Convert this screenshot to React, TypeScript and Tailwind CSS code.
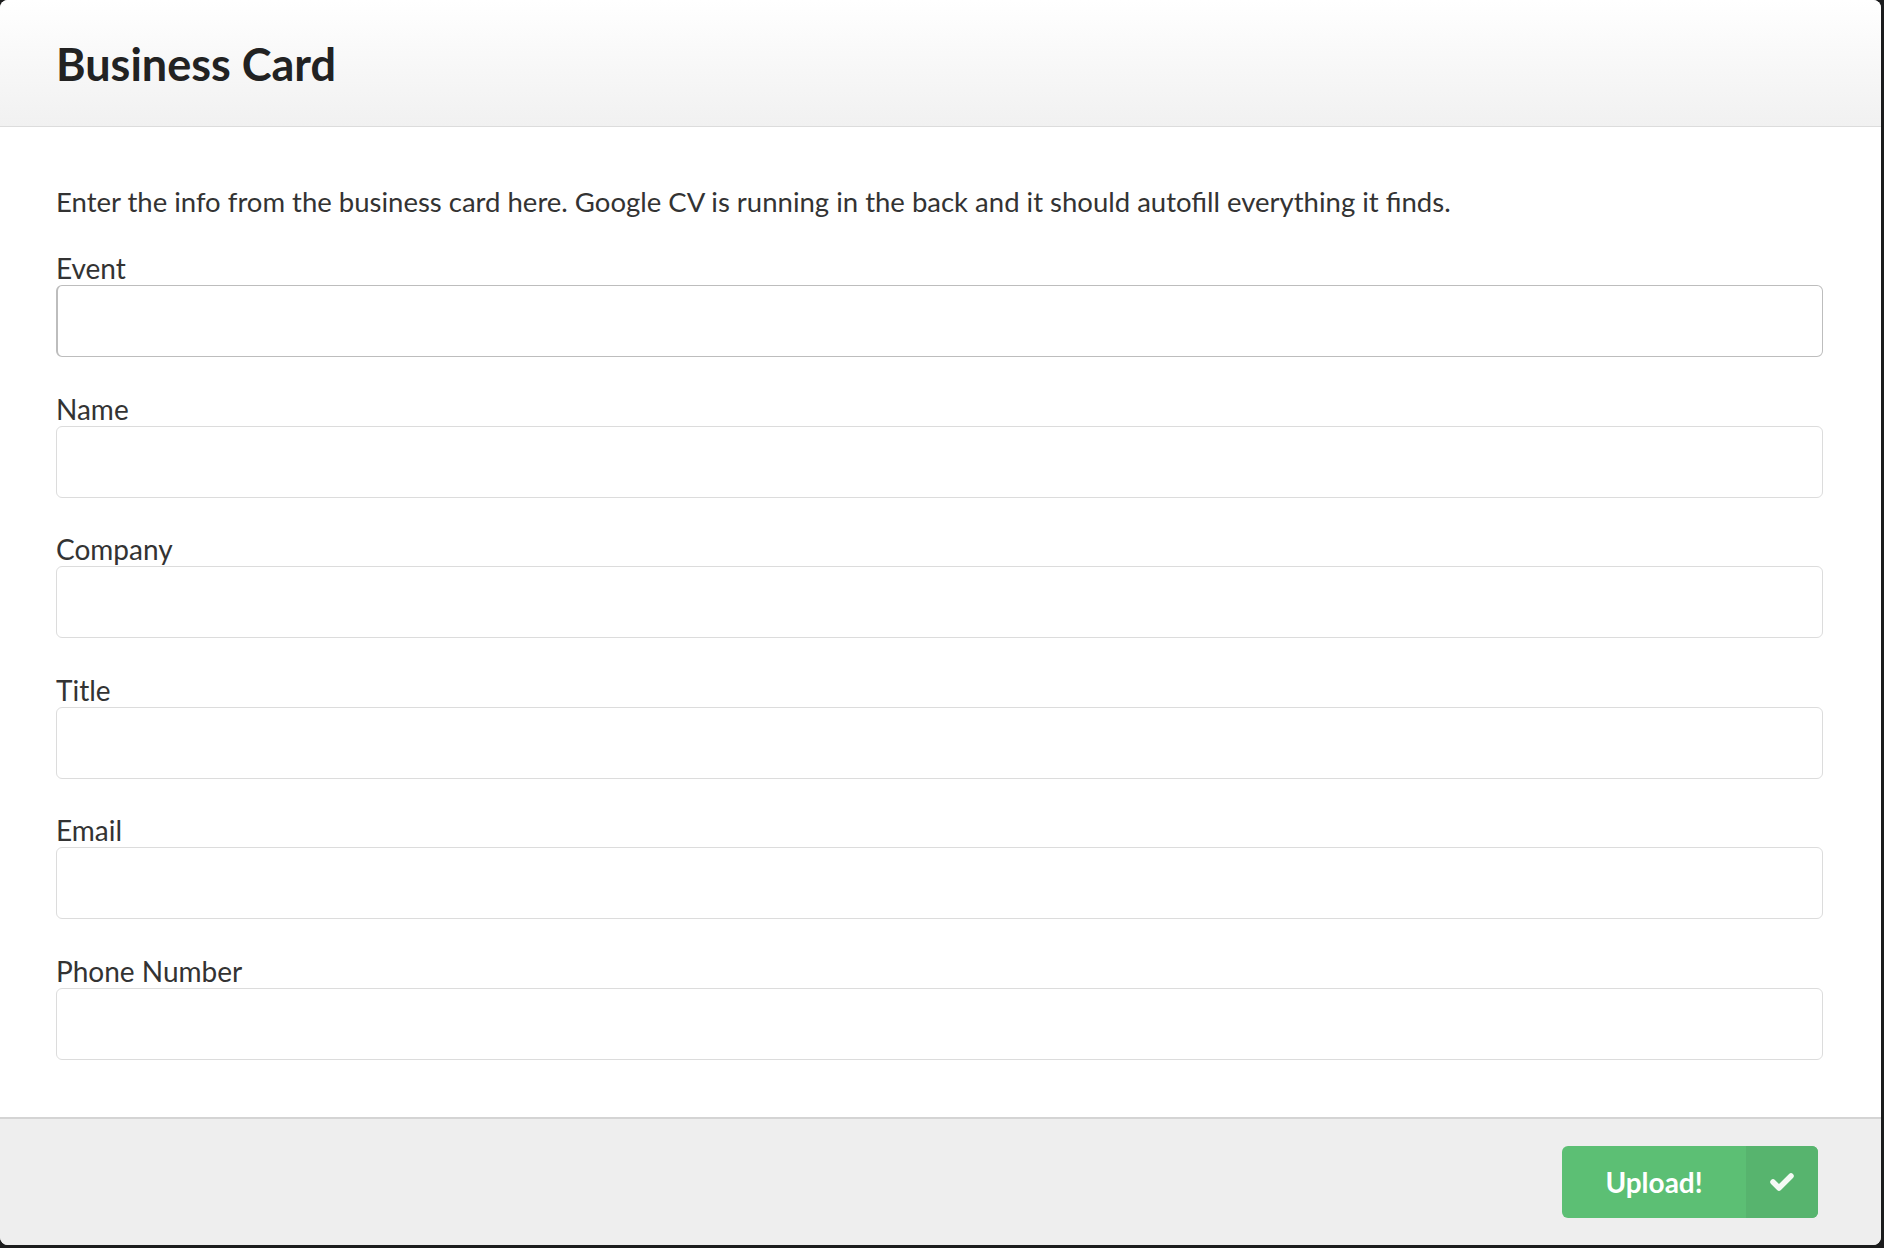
const fields = ['Event', 'Name', 'Company', 'Title', 'Email', 'Phone Number'];

function CheckIcon() {
  return (
    <svg width="26" height="20" viewBox="0 0 26 20" fill="none">
      <polyline
        points="4,10 10,16 22,4"
        stroke="#f4faf5"
        strokeWidth="5.5"
        strokeLinecap="round"
        strokeLinejoin="round"
      />
    </svg>
  );
}

export default function App() {
  return (
    <div className="w-[1884px] h-[1248px] bg-[#1b1c1d] font-['Lato','Liberation_Sans',sans-serif]">
      <div className="w-[1881px] h-[1245px] bg-white rounded-lg overflow-hidden flex flex-col">
        {/* Header */}
        <div className="h-[127px] shrink-0 flex items-center px-[56px] border-b border-[#dcdcdc] bg-gradient-to-b from-white to-[#f1f1f1]">
          <h1 className="text-[45px] leading-[56px] font-bold text-[#222] mt-[2px]">Business Card</h1>
        </div>

        {/* Body */}
        <div className="flex-1 px-[56px] pt-[57px] pr-[58px]">
          <p className="text-[27.5px] leading-[36px] text-[#333] mb-[33px]">
            Enter the info from the business card here. Google CV is running in the back and it should autofill
            everything it finds.
          </p>
          <div className="flex flex-col gap-[36.5px]">
            {fields.map((label, i) => (
              <div key={label} className="flex flex-col">
                <label className="text-[28px] leading-[30px] text-[#333] mb-[2px]">{label}</label>
                <input
                  type="text"
                  className={
                    i === 0
                      ? 'h-[72px] w-full rounded-[6px] border border-[#bdbdbd] border-l-2 bg-white outline-none'
                      : 'h-[72px] w-full rounded-[6px] border border-[#dcdcdc] bg-white outline-none'
                  }
                />
              </div>
            ))}
          </div>
        </div>

        {/* Footer */}
        <div className="h-[128px] shrink-0 flex items-center justify-end pr-[63px] bg-[#eeeeee] border-t-2 border-[#d4d4d4]">
          <button className="flex h-[72px] w-[256px] rounded-[6px] overflow-hidden bg-[#5cbf74] text-white">
            <span className="flex-1 flex items-center justify-center text-[28px] font-bold">Upload!</span>
            <span className="w-[72px] flex items-center justify-center bg-[#57b46e]">
              <CheckIcon />
            </span>
          </button>
        </div>
      </div>
    </div>
  );
}
